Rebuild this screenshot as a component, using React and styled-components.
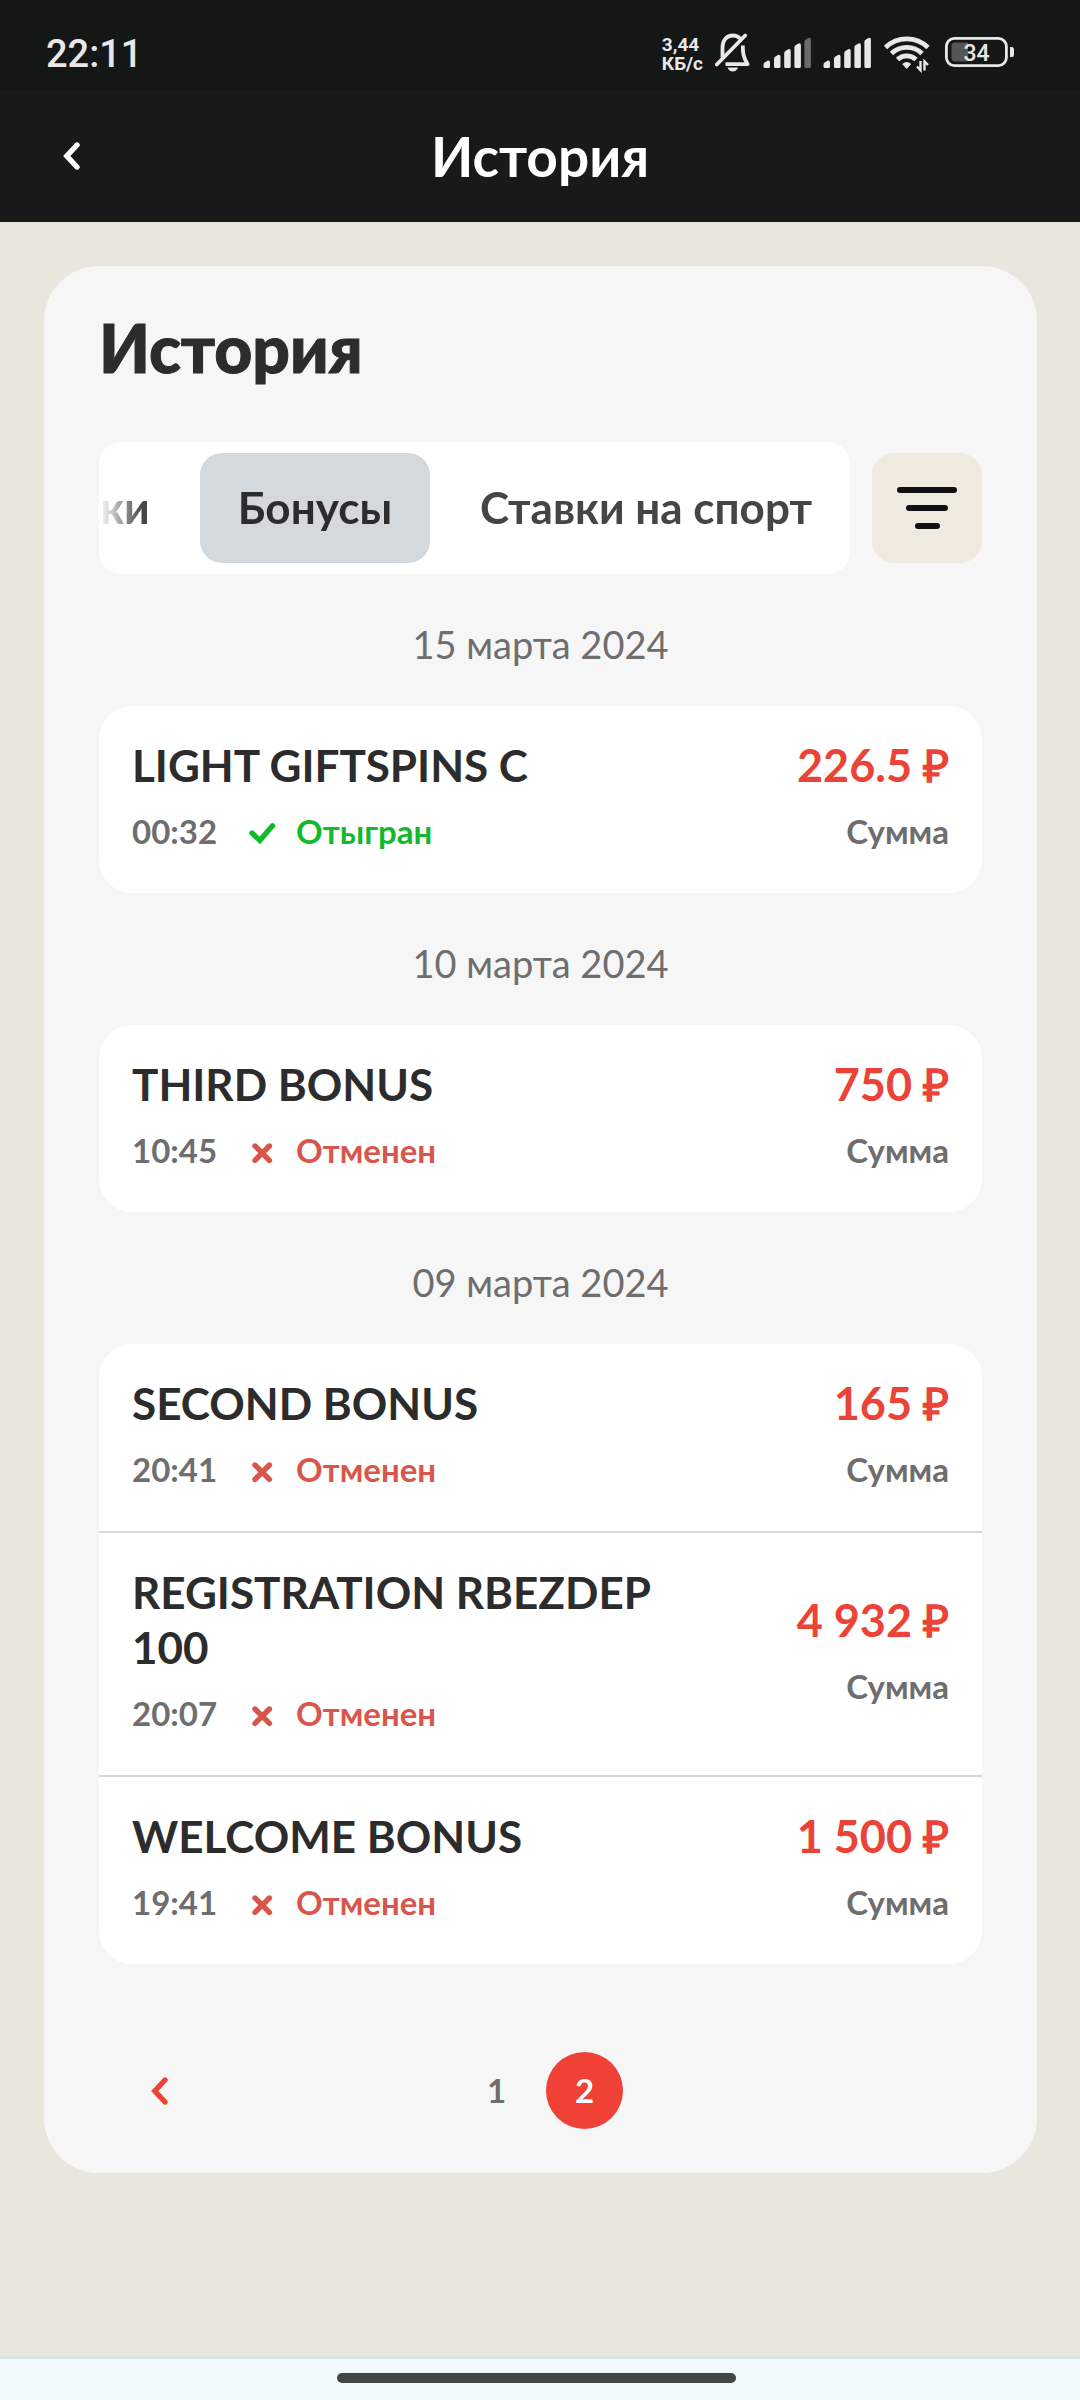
import React, { useState } from 'react';
import styled, { createGlobalStyle } from 'styled-components';

const GlobalStyle = createGlobalStyle`
  * {
    box-sizing: border-box;
  }
  body {
    margin: 0;
    background-color: #e9e6de;
    font-family: Lato, 'Open Sans', sans-serif;
  }
  h1, h2, h3, p, ul {
    margin: 0;
    padding: 0;
  }
  ul {
    list-style: none;
  }
  button {
    border: none;
    padding: 0;
    background: none;
    font-family: inherit;
    cursor: pointer;
  }
  svg {
    display: block;
    flex-shrink: 0;
  }
`;

const Page = styled.div`
  min-height: 100vh;
  display: flex;
  flex-direction: column;
`;

const StatusBar = styled.div`
  height: 90px;
  padding: 14px 66px 0 46px;
  display: flex;
  align-items: center;
  justify-content: space-between;
  background-color: #151716;
  color: #e8e8e8;
  font-family: Roboto, sans-serif;
`;

const Clock = styled.time`
  padding-top: 4px;
  font-size: 38px;
  font-weight: 500;
`;

const StatusIcons = styled.div`
  display: flex;
  align-items: center;
  gap: 12px;
`;

const NetSpeed = styled.div`
  padding-top: 3px;
  font-size: 19px;
  font-weight: 700;
  line-height: 19px;
`;

const Header = styled.header`
  height: 132px;
  padding: 0 44px;
  display: grid;
  grid-template-columns: 55px 1fr 55px;
  align-items: center;
  background-color: #191919;
  color: #ffffff;
`;

const BackButton = styled.button`
  height: 55px;
  display: flex;
  align-items: center;
  justify-content: center;
  color: #ffffff;
`;

const HeaderTitle = styled.h1`
  font-size: 55px;
  font-weight: 700;
  line-height: 66px;
  text-align: center;
`;

const Main = styled.main`
  flex: 1;
  padding: 44px 43px 44px 44px;
`;

const Panel = styled.section`
  padding: 44px 55px;
  border-radius: 55px;
  background-color: #f6f6f6;
`;

const PanelTitle = styled.h2`
  margin-bottom: 57px;
  color: #2c2c2d;
  font-size: 66px;
  font-weight: 900;
  line-height: 75px;
  -webkit-text-stroke: 1px currentColor;
`;

const Toolbar = styled.div`
  display: flex;
  align-items: center;
  gap: 22px;
`;

const TabsWrapper = styled.div`
  flex: 1;
  min-width: 0;
  border-radius: 22px;
  background-color: #ffffff;
  overflow: hidden;
`;

const TabList = styled.div`
  padding: 11px 0;
  display: flex;
  justify-content: flex-end;
  gap: 12px;
  mask-image: linear-gradient(to right, transparent, #000 44px);
`;

const Tab = styled.button`
  flex-shrink: 0;
  height: 110px;
  padding: 0 38px 2px;
  border-radius: 22px;
  background-color: ${({ $active }) => ($active ? '#d4d9dd' : 'transparent')};
  color: ${({ $active }) => ($active ? '#2c2c2d' : '#444547')};
  font-size: 44px;
  font-weight: 700;
  white-space: nowrap;
`;

const FilterButton = styled.button`
  width: 110px;
  height: 110px;
  display: flex;
  align-items: center;
  justify-content: center;
  border-radius: 22px;
  background-color: #f0e9df;
  color: #101112;
`;

const DayTitle = styled.h3`
  padding: 43px 0 34px;
  color: #6e6e6f;
  font-size: 38px;
  font-weight: 400;
  line-height: 55px;
  text-align: center;
`;

const BonusList = styled.ul`
  border-radius: 33px;
  background-color: #ffffff;
  overflow: hidden;
`;

const BonusItem = styled.li`
  padding: 32px 33px 34px;
  display: grid;
  grid-template-columns: 7fr 3fr;
  align-items: center;

  & + & {
    border-top: 2px solid #d4d9dd;
  }
`;

const BonusColumn = styled.div`
  display: flex;
  flex-direction: column;
  align-items: ${({ $end }) => ($end ? 'flex-end' : 'flex-start')};
  gap: 11px;
`;

const BonusName = styled.p`
  color: #2c2c2d;
  font-size: 44px;
  font-weight: 700;
  line-height: 55px;
`;

const Amount = styled.p`
  color: #ec4338;
  font-size: 45px;
  font-weight: 700;
  line-height: 55px;
  white-space: nowrap;
`;

const Meta = styled.div`
  display: flex;
  align-items: center;
  color: #6e6e6f;
  font-size: 33px;
  font-weight: 700;
  line-height: 55px;
`;

const Status = styled.span`
  margin-left: 24px;
  display: flex;
  align-items: center;
  gap: 11px;
  color: ${({ $type }) => ($type === 'done' ? '#12b92c' : '#d8564b')};
`;

const Pagination = styled.nav`
  margin-top: 88px;
  display: grid;
  grid-template-columns: 121px 1fr 121px;
  align-items: center;
`;

const PrevButton = styled(BackButton)`
  color: #ec4338;
`;

const PageList = styled.div`
  display: flex;
  justify-content: center;
  gap: 11px;
`;

const PageButton = styled.button`
  width: 77px;
  height: 77px;
  padding-bottom: 2px;
  border-radius: 50%;
  background-color: ${({ $active }) => ($active ? '#f04137' : 'transparent')};
  color: ${({ $active }) => ($active ? '#ffffff' : '#6e6e6f')};
  font-size: 33px;
  font-weight: 700;
`;

const HomeBar = styled.div`
  height: 44px;
  display: flex;
  align-items: center;
  justify-content: center;
  border-top: 3px solid #d9e1e1;
  background-color: #f1fafc;
`;

const HomeHandle = styled.div`
  width: 37%;
  height: 10px;
  margin: 0 7px 3px 0;
  border-radius: 5px;
  background-color: #444545;
`;

const tabs = ['Ставки', 'Бонусы', 'Ставки на спорт'];

const statusText = {
  done: 'Отыгран',
  canceled: 'Отменен',
};

const days = [
  {
    date: '15 марта 2024',
    items: [{ name: 'LIGHT GIFTSPINS C', time: '00:32', status: 'done', amount: '226.5 ₽' }],
  },
  {
    date: '10 марта 2024',
    items: [{ name: 'THIRD BONUS', time: '10:45', status: 'canceled', amount: '750 ₽' }],
  },
  {
    date: '09 марта 2024',
    items: [
      { name: 'SECOND BONUS', time: '20:41', status: 'canceled', amount: '165 ₽' },
      { name: 'REGISTRATION RBEZDEP 100', time: '20:07', status: 'canceled', amount: '4 932 ₽' },
      { name: 'WELCOME BONUS', time: '19:41', status: 'canceled', amount: '1 500 ₽' },
    ],
  },
];

function BellOffIcon() {
  return (
    <svg width="36" height="44" viewBox="0 0 36 44" fill="none" stroke="currentColor" strokeWidth="3.8">
      <path d="M7.5 27.5V17.5C7.5 10.5 11.5 5.5 17.7 5.5C20.8 5.5 23.2 6.5 25 8.5" />
      <path d="M27.8 15.5C27.8 23 28.2 27 32.6 34.2H10.5" strokeLinejoin="round" />
      <path d="M1.8 34.5L30.2 5.5" strokeLinecap="round" />
      <path d="M12.5 37.6H23C22 40.3 20.2 41.6 17.8 41.6S13.5 40.3 12.5 37.6Z" fill="currentColor" stroke="none" />
    </svg>
  );
}

const signalBars = [
  { x: 0.5, y: 30.5 },
  { x: 11, y: 24.8 },
  { x: 21.2, y: 19 },
  { x: 31.4, y: 13.3 },
  { x: 41.4, y: 7.6 },
];

function SignalIcon({ level }) {
  return (
    <svg width="48" height="44" viewBox="0 0 48 44" fill="currentColor">
      {signalBars.map(({ x, y }, i) => (
        <path
          key={x}
          d={`M${x} ${y + 4.2}Q${x} ${y + 2.6} ${x + 1.5} ${y + 1.8}L${x + 4} ${y + 0.3}Q${x + 6.5} ${y - 0.6} ${x + 6.5} ${y + 2}V36.5Q${x + 6.5} 38 ${x + 5} 38H${x + 1.5}Q${x} 38 ${x} 36.5Z`}
          opacity={i < level ? 1 : 0.4}
        />
      ))}
    </svg>
  );
}

function WifiIcon() {
  return (
    <svg width="48" height="44" viewBox="0 0 48 44" fill="none" stroke="currentColor" strokeWidth="4.8">
      <path d="M2.5 17.5A30.5 30.5 0 0 1 45 17.5" />
      <path d="M8.5 23.5A22 22 0 0 1 39 23.5" />
      <path d="M14.5 29.5A13.5 13.5 0 0 1 33 29.5" />
      <path d="M19.2 34Q23.7 29.8 28.2 34L23.7 39Z" fill="currentColor" stroke="none" />
      <path d="M37.5 31V40.3L34 36.5M41.5 40.5V31.5L45 35" strokeWidth="2.4" />
    </svg>
  );
}

function BatteryIcon() {
  return (
    <svg width="71" height="44" viewBox="0 0 71 44" fill="none">
      <rect x="3.4" y="8.4" width="60" height="27.2" rx="8" stroke="currentColor" strokeWidth="2.8" />
      <path d="M12 12.5H25V31.5H12Q8.5 31.5 8.5 28V16Q8.5 12.5 12 12.5Z" fill="#545655" />
      <path d="M67 17H69Q71 17 71 19.5V24.5Q71 27 69 27H67Z" fill="currentColor" />
      <text x="33.5" y="30.5" textAnchor="middle" fill="currentColor" fontSize="23" fontWeight="500">
        34
      </text>
    </svg>
  );
}

function ChevronIcon() {
  return (
    <svg width="18" height="28" viewBox="0 0 18 28" fill="none" stroke="currentColor" strokeWidth="5.4">
      <path d="M14 3L3.8 14L14 25" strokeLinecap="round" />
    </svg>
  );
}

function FilterIcon() {
  return (
    <svg width="66" height="66" viewBox="0 0 66 66" fill="none" stroke="currentColor" strokeWidth="6">
      <path d="M6 15H60M15 33H51M24 51H43" strokeLinecap="round" />
    </svg>
  );
}

function StatusIcon({ type }) {
  return (
    <svg width="44" height="44" viewBox="0 0 44 44" fill="none" stroke="currentColor" strokeWidth="5.4">
      {type === 'done' ? (
        <path d="M11 23L18.8 30.4L31.5 15.8" strokeLinecap="round" />
      ) : (
        <path d="M14 17L28.4 31.4M28.4 17L14 31.4" strokeLinecap="round" />
      )}
    </svg>
  );
}

function Bonus({ name, time, status, amount }) {
  return (
    <BonusItem>
      <BonusColumn>
        <BonusName>{name}</BonusName>
        <Meta>
          <time>{time}</time>
          <Status $type={status}>
            <StatusIcon type={status} />
            {statusText[status]}
          </Status>
        </Meta>
      </BonusColumn>
      <BonusColumn $end>
        <Amount>{amount}</Amount>
        <Meta>Сумма</Meta>
      </BonusColumn>
    </BonusItem>
  );
}

function App() {
  const [tab, setTab] = useState('Бонусы');
  const [page, setPage] = useState(2);

  return (
    <Page>
      <GlobalStyle />
      <StatusBar>
        <Clock>22:11</Clock>
        <StatusIcons>
          <NetSpeed>
            3,44
            <br />
            КБ/с
          </NetSpeed>
          <BellOffIcon />
          <SignalIcon level={4} />
          <SignalIcon level={5} />
          <WifiIcon />
          <BatteryIcon />
        </StatusIcons>
      </StatusBar>
      <Header>
        <BackButton type="button" aria-label="Назад">
          <ChevronIcon />
        </BackButton>
        <HeaderTitle>История</HeaderTitle>
      </Header>
      <Main>
        <Panel>
          <PanelTitle>История</PanelTitle>
          <Toolbar>
            <TabsWrapper>
              <TabList role="tablist">
                {tabs.map((it) => (
                  <Tab
                    key={it}
                    type="button"
                    role="tab"
                    aria-selected={it === tab}
                    $active={it === tab}
                    onClick={() => setTab(it)}
                  >
                    {it}
                  </Tab>
                ))}
              </TabList>
            </TabsWrapper>
            <FilterButton type="button" aria-label="Фильтр">
              <FilterIcon />
            </FilterButton>
          </Toolbar>
          {days.map((day) => (
            <section key={day.date}>
              <DayTitle>{day.date}</DayTitle>
              <BonusList>
                {day.items.map((it) => (
                  <Bonus key={it.name} {...it} />
                ))}
              </BonusList>
            </section>
          ))}
          <Pagination aria-label="Страницы">
            <PrevButton type="button" aria-label="Предыдущая" onClick={() => setPage(1)}>
              <ChevronIcon />
            </PrevButton>
            <PageList>
              {[1, 2].map((it) => (
                <PageButton key={it} type="button" $active={it === page} onClick={() => setPage(it)}>
                  {it}
                </PageButton>
              ))}
            </PageList>
          </Pagination>
        </Panel>
      </Main>
      <HomeBar>
        <HomeHandle />
      </HomeBar>
    </Page>
  );
}

export default App;
